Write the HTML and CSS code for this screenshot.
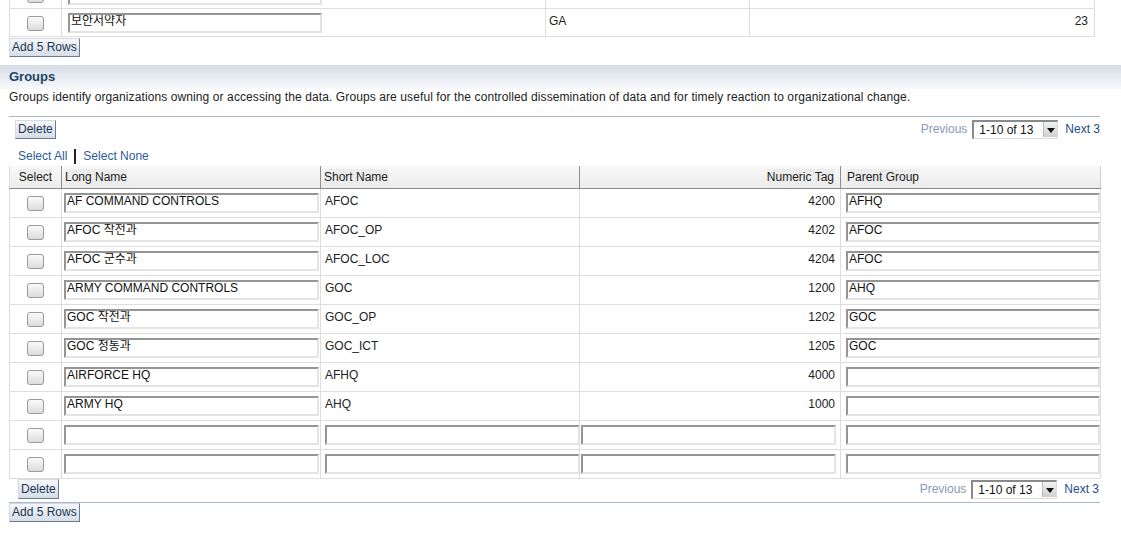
FILE: index.html
```html
<!DOCTYPE html>
<html>
<head>
<meta charset="utf-8">
<link rel="stylesheet" href="styles.css">
</head>
<body>
<div class="top">
  <table class="grid top-grid">
    <colgroup><col class="c1"><col class="c2"><col class="c3"><col class="c4"></colgroup>
    <tr>
      <td class="sel"><span class="cb"></span></td>
      <td><span class="inp w256"></span></td>
      <td></td>
      <td class="num"></td>
    </tr>
    <tr>
      <td class="sel"><span class="cb"></span></td>
      <td><span class="inp w256">보안서약자</span></td>
      <td class="txt">GA</td>
      <td class="num">23</td>
    </tr>
  </table>
  <div class="btnrow"><span class="btn">Add 5 Rows</span></div>
</div>

<div class="band"><span class="band-title">Groups</span></div>
<p class="desc">Groups identify organizations owning or accessing the data. Groups are useful for the controlled dissemination of data and for timely reaction to organizational change.</p>

<div class="section">
  <div class="toolbar first">
    <span class="btn">Delete</span>
    <div class="pager">
      <span class="prev">Previous</span>
      <span class="combo"><span class="combo-text">1-10 of 13</span><span class="combo-arrow"></span></span>
      <span class="next">Next 3</span>
    </div>
  </div>
  <div class="selects"><a class="lnk">Select All</a><span class="bar"></span><a class="lnk">Select None</a></div>
  <table class="grid main-grid">
    <colgroup><col class="g1"><col class="g2"><col class="g3"><col class="g4"><col class="g5"></colgroup>
    <thead>
      <tr>
        <th class="sel"><span class="hl">Select</span></th>
        <th><span class="hl">Long Name</span></th>
        <th><span class="hl">Short Name</span></th>
        <th class="num"><span class="hl">Numeric Tag</span></th>
        <th><span class="hl">Parent Group</span></th>
      </tr>
    </thead>
    <tbody>
      <tr><td class="sel"><span class="cb"></span></td><td class="ln"><span class="inp">AF COMMAND CONTROLS</span></td><td class="txt">AFOC</td><td class="num">4200</td><td class="pg"><span class="inp">AFHQ</span></td></tr>
      <tr><td class="sel"><span class="cb"></span></td><td class="ln"><span class="inp">AFOC 작전과</span></td><td class="txt">AFOC_OP</td><td class="num">4202</td><td class="pg"><span class="inp">AFOC</span></td></tr>
      <tr><td class="sel"><span class="cb"></span></td><td class="ln"><span class="inp">AFOC 군수과</span></td><td class="txt">AFOC_LOC</td><td class="num">4204</td><td class="pg"><span class="inp">AFOC</span></td></tr>
      <tr><td class="sel"><span class="cb"></span></td><td class="ln"><span class="inp">ARMY COMMAND CONTROLS</span></td><td class="txt">GOC</td><td class="num">1200</td><td class="pg"><span class="inp">AHQ</span></td></tr>
      <tr><td class="sel"><span class="cb"></span></td><td class="ln"><span class="inp">GOC 작전과</span></td><td class="txt">GOC_OP</td><td class="num">1202</td><td class="pg"><span class="inp">GOC</span></td></tr>
      <tr><td class="sel"><span class="cb"></span></td><td class="ln"><span class="inp">GOC 정통과</span></td><td class="txt">GOC_ICT</td><td class="num">1205</td><td class="pg"><span class="inp">GOC</span></td></tr>
      <tr><td class="sel"><span class="cb"></span></td><td class="ln"><span class="inp">AIRFORCE HQ</span></td><td class="txt">AFHQ</td><td class="num">4000</td><td class="pg"><span class="inp"></span></td></tr>
      <tr><td class="sel"><span class="cb"></span></td><td class="ln"><span class="inp">ARMY HQ</span></td><td class="txt">AHQ</td><td class="num">1000</td><td class="pg"><span class="inp"></span></td></tr>
      <tr><td class="sel"><span class="cb"></span></td><td class="ln"><span class="inp"></span></td><td class="sn"><span class="inp"></span></td><td class="nt"><span class="inp"></span></td><td class="pg"><span class="inp"></span></td></tr>
      <tr><td class="sel"><span class="cb"></span></td><td class="ln"><span class="inp"></span></td><td class="sn"><span class="inp"></span></td><td class="nt"><span class="inp"></span></td><td class="pg"><span class="inp"></span></td></tr>
    </tbody>
  </table>
  <div class="toolbar second">
    <span class="btn">Delete</span>
    <div class="pager">
      <span class="prev">Previous</span>
      <span class="combo"><span class="combo-text">1-10 of 13</span><span class="combo-arrow"></span></span>
      <span class="next">Next 3</span>
    </div>
  </div>
  <div class="btnrow last"><span class="btn">Add 5 Rows</span></div>
</div>
</body>
</html>
```

FILE: styles.css
```css
html, body {
  margin: 0;
  padding: 0;
  background: #ffffff;
}
body {
  font-family: "Liberation Sans", Arial, "Noto Sans CJK KR", sans-serif;
  font-size: 12px;
  color: #222222;
  overflow: hidden;
}
.top {
  margin-left: 9px;
  margin-top: -20px;
}
.grid {
  border-collapse: collapse;
  table-layout: fixed;
}
.grid td {
  border: 1px solid #dedede;
  height: 28px;
  padding: 0;
  vertical-align: middle;
  box-sizing: border-box;
}
.top-grid { width: 1085px; }
.c1 { width: 52px; }
.c2 { width: 484px; }
.c3 { width: 204px; }
.c4 { width: 345px; }

.sel { text-align: center; }
.grid td.txt { padding-left: 3px; padding-bottom: 3px; }
.grid td.num { text-align: right; padding-right: 6px; padding-bottom: 3px; }
.top-grid td:nth-child(2) { padding-left: 6px; }

.cb {
  display: inline-block;
  width: 15px;
  height: 13px;
  border: 1px solid #9a9a9a;
  border-radius: 3px;
  background: linear-gradient(#fafafa, #dcdcdc);
  vertical-align: middle;
  margin-top: 1px;
}
.inp {
  display: block;
  box-sizing: border-box;
  height: 20px;
  width: 254px;
  border-style: solid;
  border-width: 2px 2px 2px 2px;
  border-color: #959595 #e4e4e4 #e4e4e4 #959595;
  background: #ffffff;
  font-size: 12px;
  line-height: 13px;
  padding-left: 1px;
  color: #111;
  white-space: nowrap;
  overflow: hidden;
}
.w256 { width: 254px; }

.btnrow { height: 20px; padding-top: 1px; }
.btn {
  display: inline-block;
  box-sizing: border-box;
  height: 19px;
  line-height: 17px;
  padding: 0 2px;
  font-size: 12px;
  color: #1c3553;
  border: 1px solid;
  border-color: #d4dae3 #6c7a8e #6c7a8e #d4dae3;
  background: linear-gradient(#f6f8fa, #d5dde8);
}

.band {
  margin-top: 7px;
  height: 24px;
  background: linear-gradient(#d6dde7, #f8f9fb);
  padding-left: 9px;
  box-sizing: border-box;
  padding-top: 4px;
}
.band-title {
  font-weight: bold;
  font-size: 13px;
  color: #1a4466;
}
.desc {
  margin: 1px 0 0 9px;
  line-height: 15px;
  font-size: 12px;
  letter-spacing: 0.1px;
  color: #222;
}

.section {
  margin: 11px 21px 0 9px;
}
.toolbar {
  display: flex;
  align-items: center;
  justify-content: space-between;
}
.toolbar.first {
  border-top: 1px solid #a8b8d0;
  padding: 2px 0 0 6px;
  height: 20px;
}
.toolbar.second {
  padding: 0 1px 0 9px;
  height: 23px;
  align-items: flex-start;
  border-bottom: 1px solid #a8b8d0;
}
.toolbar.second .btn { height: 20px; line-height: 18px; }
.pager {
  display: flex;
  align-items: center;
  gap: 5px;
}
.toolbar.second .pager { margin-top: 1px; }
.prev { color: #8a9ab2; }
.next { color: #1e4d8c; margin-left: 2px; }
.combo {
  display: inline-flex;
  align-items: center;
  box-sizing: border-box;
  width: 86px;
  height: 19px;
  border-style: solid;
  border-width: 2px 1px 1px 2px;
  border-color: #8a8a8a #dcdcdc #dcdcdc #8a8a8a;
  background: #fff;
}
.combo-text {
  flex: 1;
  padding-left: 5px;
  color: #111;
}
.combo-arrow {
  width: 13px;
  height: 15px;
  background: linear-gradient(#f2f2f2, #cfcfcf);
  border-left: 1px solid #bbb;
  position: relative;
}
.combo-arrow::after {
  content: "";
  position: absolute;
  left: 3px;
  top: 6px;
  border-left: 4px solid transparent;
  border-right: 4px solid transparent;
  border-top: 5px solid #111;
}

.selects {
  display: flex;
  align-items: center;
  height: 16px;
  margin: 9px 0 2px 9px;
}
.lnk { color: #2a5a98; }
.bar {
  display: inline-block;
  width: 2px;
  height: 15px;
  background: #222;
  margin: 0 7px;
}

.main-grid { width: 1091px; }
.g1 { width: 52px; }
.g2 { width: 259px; }
.g3 { width: 259px; }
.g4 { width: 261px; }
.g5 { width: 260px; }
.main-grid th {
  height: 22px;
  padding: 0 3px;
  font-weight: normal;
  text-align: left;
  color: #222;
  background: linear-gradient(#f8f8f8, #ececec);
  border-left: 1px solid #8e8e8e;
  border-right: 1px solid #8e8e8e;
  border-bottom: 1px solid #8a8a8a;
  box-sizing: border-box;
}
.main-grid th:first-child { border-left: 1px solid #dedede; text-align: center; }
.main-grid th:last-child { border-right: 1px solid #cfcfcf; padding-left: 6px; }
.main-grid th.num { text-align: right; padding-right: 6px; }
.hl { background: #ececec; padding: 1px 0; }
.main-grid td { height: 29px; }
.main-grid td.txt { padding-left: 4px; }
.main-grid td.ln { padding-left: 2px; }
.main-grid td.sn { padding-left: 4px; }
.main-grid td.nt { padding-left: 1px; }
.main-grid td.pg { padding-left: 5px; }
.main-grid td.pg .inp { width: 254px; }
.main-grid td.ln .inp, .main-grid td.sn .inp { width: 255px; }
.main-grid td.nt .inp { width: 255px; }
.main-grid td.num { padding-right: 5px; }

.btnrow.last { padding-top: 0; margin-left: 0; }
```
